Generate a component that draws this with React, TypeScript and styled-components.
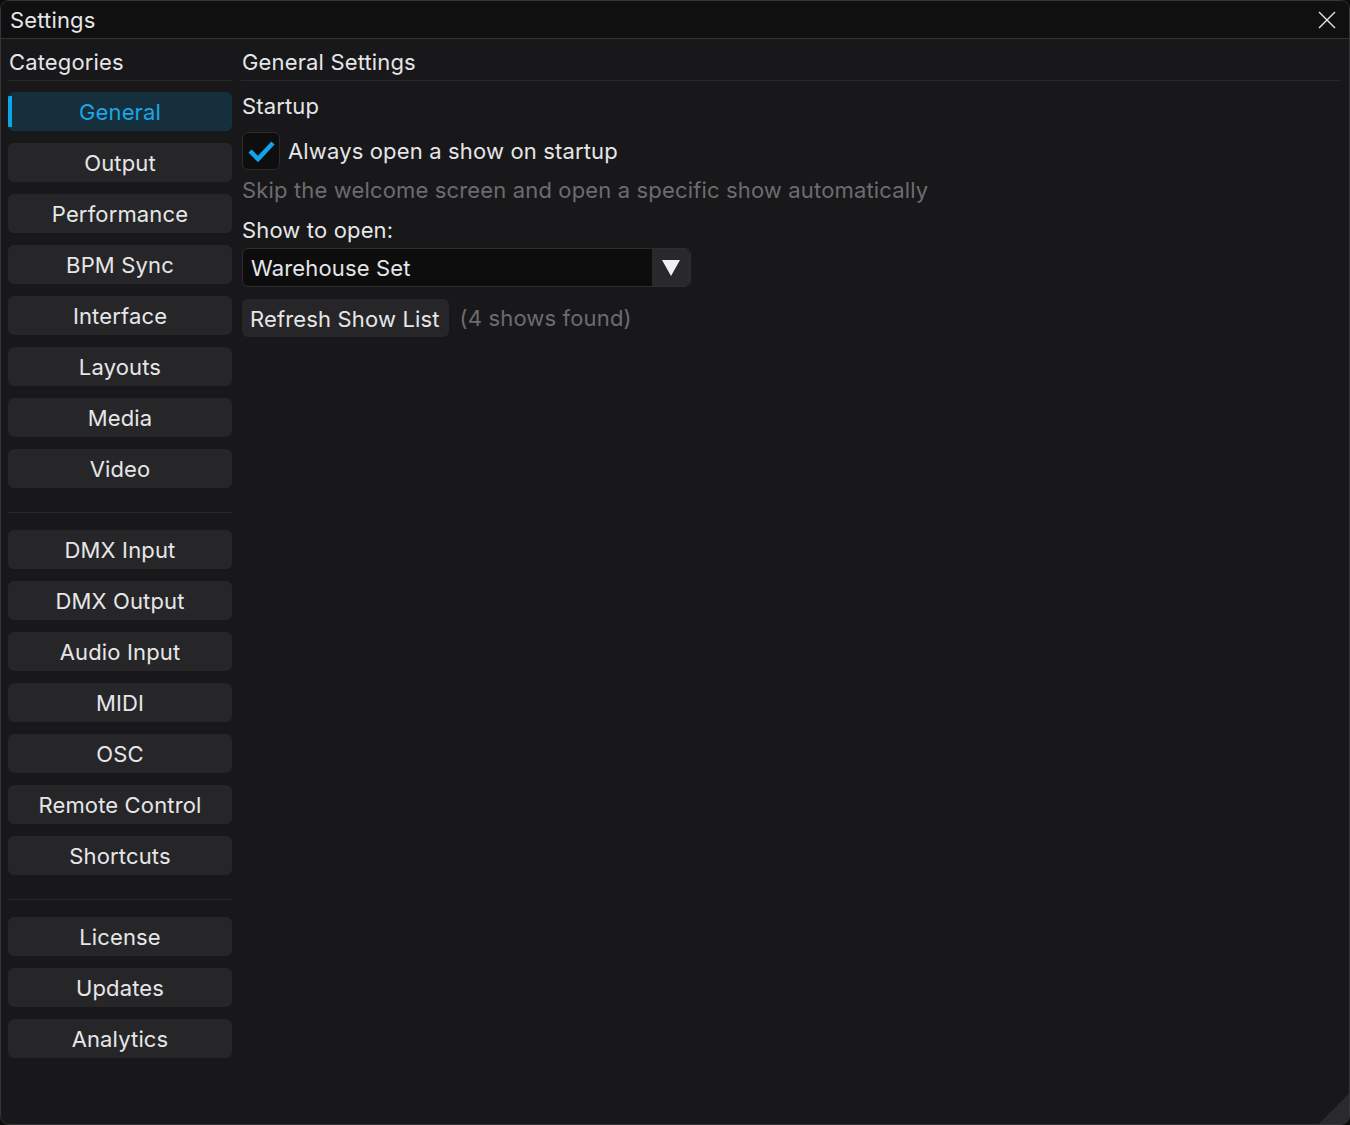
import React, { useState } from 'react';
import styled, { createGlobalStyle } from 'styled-components';

const GlobalStyle = createGlobalStyle`
  html, body {
    margin: 0;
    padding: 0;
    background: #0c0c0d;
  }
  * {
    box-sizing: border-box;
  }
`;

const Window = styled.div`
  position: relative;
  width: 1350px;
  height: 1125px;
  display: flex;
  flex-direction: column;
  background: #18181a;
  border: 1px solid #363638;
  border-radius: 9px;
  overflow: hidden;
  font-family: Inter, "Noto Sans", sans-serif;
  font-size: 22px;
  letter-spacing: 0.15px;
  color: #e6e6e8;
`;

const TitleBar = styled.div`
  height: 38px;
  flex: none;
  display: flex;
  align-items: center;
  justify-content: space-between;
  padding: 0 12px 0 9px;
  background: #101011;
  border-bottom: 1px solid #333335;
`;

const Title = styled.span`
  line-height: 24px;
  padding-top: 1px;
`;

const CloseButton = styled.button`
  width: 20px;
  height: 20px;
  padding: 0;
  border: none;
  background: none;
  display: flex;
  align-items: center;
  justify-content: center;
  cursor: pointer;
`;

const Body = styled.div`
  flex: 1;
  display: grid;
  grid-template-columns: 224px 1fr;
  column-gap: 9px;
  padding: 11px 8px 8px 7px;
`;

const Column = styled.div`
  display: flex;
  flex-direction: column;
  min-width: 0;
`;

const PanelHeader = styled.div`
  line-height: 24px;
  padding-bottom: 6px;
  border-bottom: 1px solid #28282a;
  padding-left: 1px;
`;

const CategoryList = styled.nav`
  display: flex;
  flex-direction: column;
  margin-top: 11px;
`;

const Group = styled.div`
  display: flex;
  flex-direction: column;
  gap: 12px;
`;

const Divider = styled.div`
  height: 1px;
  background: #28282a;
  margin: 24px 0 17px;
`;

const CategoryButton = styled.button<{ $active?: boolean }>`
  position: relative;
  height: 39px;
  padding: 1px 0 0;
  border: none;
  border-radius: 6px;
  font: inherit;
  letter-spacing: inherit;
  color: ${(p) => (p.$active ? '#1ba6e6' : '#e6e6e8')};
  background: ${(p) => (p.$active ? '#162f3c' : '#262628')};
  cursor: pointer;
  overflow: hidden;

  &::before {
    content: '';
    display: ${(p) => (p.$active ? 'block' : 'none')};
    position: absolute;
    left: 0;
    top: 4px;
    bottom: 4px;
    width: 4px;
    background: #0ea5e9;
  }
`;

const Content = styled.div`
  display: flex;
  flex-direction: column;
  align-items: flex-start;
  padding-left: 1px;
`;

const SectionTitle = styled.div`
  line-height: 24px;
  margin-top: 13px;
`;

const CheckRow = styled.label`
  display: flex;
  align-items: center;
  gap: 8px;
  margin-top: 14px;
  cursor: pointer;
`;

const CheckBox = styled.span`
  width: 38px;
  height: 38px;
  display: flex;
  align-items: center;
  justify-content: center;
  background: #0e0e0f;
  border: 1px solid #2c2c2e;
  border-radius: 6px;
`;

const Hint = styled.div<{ $gap?: number }>`
  line-height: 24px;
  color: #6c6c70;
  margin-top: ${(p) => p.$gap ?? 0}px;
`;

const FieldLabel = styled.div`
  line-height: 24px;
  margin-top: 16px;
`;

const Combo = styled.div`
  width: 449px;
  height: 39px;
  margin-top: 6px;
  display: flex;
  background: #0d0d0e;
  border: 1px solid #2e2e30;
  border-radius: 6px;
  overflow: hidden;
`;

const ComboValue = styled.div`
  flex: 1;
  display: flex;
  align-items: center;
  padding: 1px 0 0 8px;
`;

const ComboArrow = styled.div`
  width: 38px;
  display: flex;
  align-items: center;
  justify-content: center;
  background: #29292b;
`;

const ActionRow = styled.div`
  display: flex;
  align-items: center;
  gap: 11px;
  margin-top: 12px;
`;

const Button = styled.button`
  height: 38px;
  padding: 1px 9px 0 8px;
  border: none;
  border-radius: 6px;
  background: #262628;
  font: inherit;
  letter-spacing: inherit;
  color: #e6e6e8;
  cursor: pointer;
`;

const ResizeGrip = styled.div`
  position: absolute;
  right: 0;
  bottom: 0;
  width: 30px;
  height: 30px;
  background: linear-gradient(135deg, transparent 50%, #2a2a2c 50%);
`;

const groups = [
  ['General', 'Output', 'Performance', 'BPM Sync', 'Interface', 'Layouts', 'Media', 'Video'],
  ['DMX Input', 'DMX Output', 'Audio Input', 'MIDI', 'OSC', 'Remote Control', 'Shortcuts'],
  ['License', 'Updates', 'Analytics'],
];

const App: React.FC = () => {
  const [active, setActive] = useState('General');
  const [openOnStartup, setOpenOnStartup] = useState(true);

  return (
    <>
      <GlobalStyle />
      <Window>
        <TitleBar>
          <Title>Settings</Title>
          <CloseButton aria-label="Close">
            <svg width="18" height="18" viewBox="0 0 18 18">
              <path d="M1 1L17 17M17 1L1 17" stroke="#e6e6e8" strokeWidth="1.4" />
            </svg>
          </CloseButton>
        </TitleBar>

        <Body>
          <Column>
            <PanelHeader>Categories</PanelHeader>
            <CategoryList>
              {groups.map((items, i) => (
                <React.Fragment key={i}>
                  {i > 0 && <Divider />}
                  <Group>
                    {items.map((name) => (
                      <CategoryButton
                        key={name}
                        $active={name === active}
                        onClick={() => setActive(name)}
                      >
                        {name}
                      </CategoryButton>
                    ))}
                  </Group>
                </React.Fragment>
              ))}
            </CategoryList>
          </Column>

          <Column>
            <PanelHeader>General Settings</PanelHeader>
            <Content>
              <SectionTitle>Startup</SectionTitle>
              <CheckRow onClick={() => setOpenOnStartup(!openOnStartup)}>
                <CheckBox>
                  {openOnStartup && (
                    <svg width="30" height="24" viewBox="0 0 30 24">
                      <path
                        d="M4 12L12 20L27 4"
                        fill="none"
                        stroke="#0ea5e9"
                        strokeWidth="4.5"
                      />
                    </svg>
                  )}
                </CheckBox>
                <span>Always open a show on startup</span>
              </CheckRow>
              <Hint $gap={8}>Skip the welcome screen and open a specific show automatically</Hint>

              <FieldLabel>Show to open:</FieldLabel>
              <Combo>
                <ComboValue>Warehouse Set</ComboValue>
                <ComboArrow>
                  <svg width="20" height="18" viewBox="0 0 20 18">
                    <path d="M1 1H19L10 17Z" fill="#f0f0f2" />
                  </svg>
                </ComboArrow>
              </Combo>

              <ActionRow>
                <Button>Refresh Show List</Button>
                <Hint>(4 shows found)</Hint>
              </ActionRow>
            </Content>
          </Column>
        </Body>
        <ResizeGrip />
      </Window>
    </>
  );
};

export default App;
